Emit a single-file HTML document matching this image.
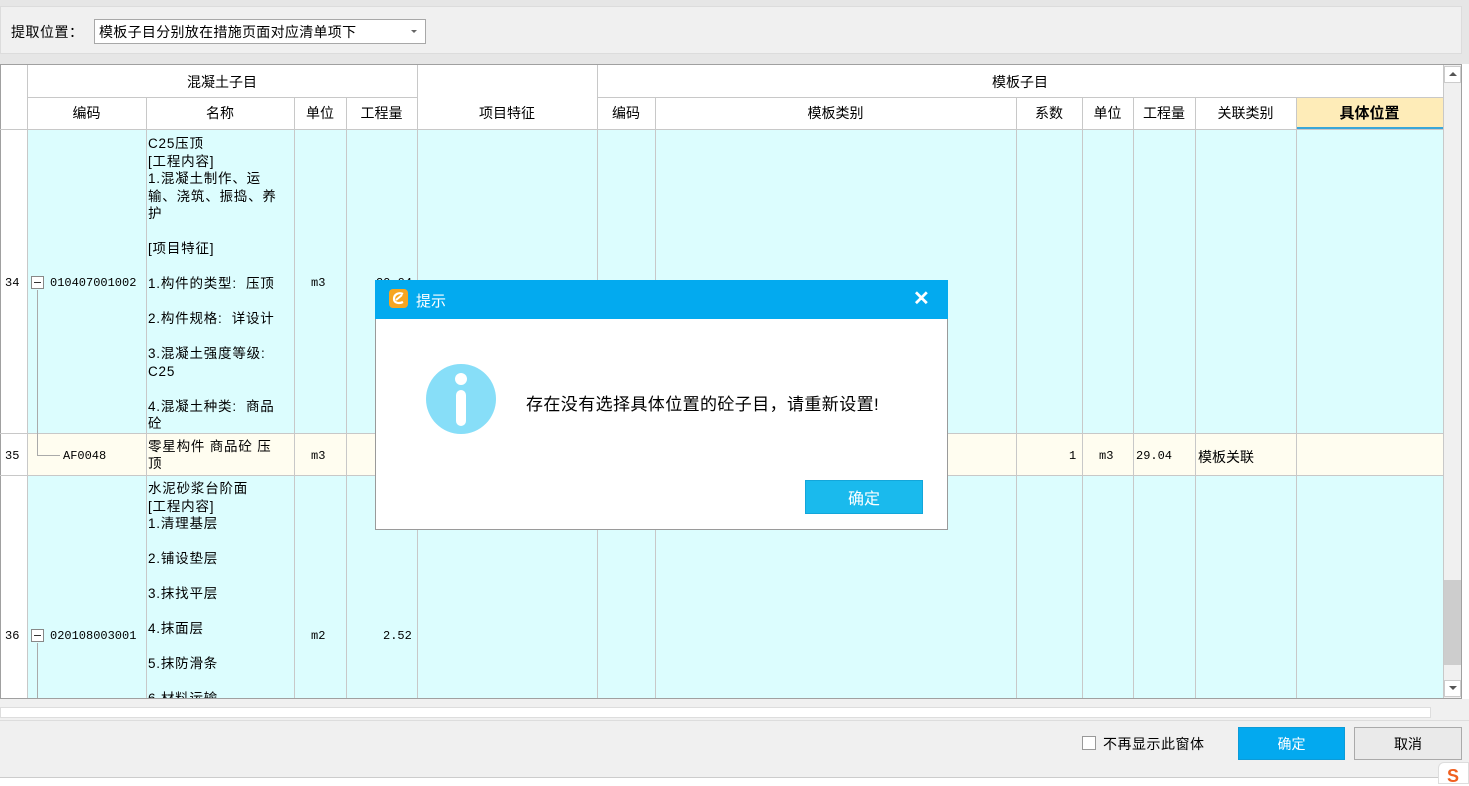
<!DOCTYPE html>
<html><head><meta charset="utf-8"><style>
*{margin:0;padding:0;box-sizing:border-box}
body{width:1469px;height:784px;overflow:hidden;background:#fff;font-family:"Liberation Sans","Noto Sans CJK SC",sans-serif;font-size:14px;color:#000;position:relative}
.a{position:absolute}
.c{position:absolute;display:flex;align-items:center;justify-content:center;white-space:nowrap}
.vl{position:absolute;width:1px;background:#c8c8c8}
.hl{position:absolute;height:1px;background:#c8c8c8}
.mono{font-family:"Liberation Mono","Noto Sans CJK SC",monospace;font-size:12px}
.nm{position:absolute;left:148px;font-size:13.5px;line-height:17.5px;white-space:pre;letter-spacing:0.8px}
</style></head><body>
<div class="a" style="left:0;top:0;width:1469px;height:64px;background:#e6e6e6"></div>
<div class="a" style="left:0;top:6px;width:1462px;height:48px;background:#f0f0f0;border:1px solid #dcdcdc"></div>
<div class="a" style="left:11px;top:22px;font-size:14px;letter-spacing:0.5px">提取位置：</div>
<div class="a" style="left:94px;top:19px;width:332px;height:25px;background:#fff;border:1px solid #a8a8a8"></div>
<div class="a" style="left:99px;top:22px;font-size:14px;letter-spacing:0.3px">模板子目分别放在措施页面对应清单项下</div>
<div class="a" style="left:411px;top:30px;width:0;height:0;border-left:3px solid transparent;border-right:3px solid transparent;border-top:3px solid #666"></div>

<div class="a" style="left:0;top:64px;width:1462px;height:635px;background:#fff;border:1px solid #a0a0a0"></div>
<div class="a" style="left:27px;top:129px;width:1416px;height:304px;background:#dcfdfe"></div>
<div class="a" style="left:27px;top:433px;width:1416px;height:42px;background:#fffdf0"></div>
<div class="a" style="left:27px;top:475px;width:1416px;height:223px;background:#dcfdfe"></div>
<div class="a" style="left:1296px;top:97px;width:147px;height:32px;background:#feecb8;border-bottom:2px solid #3aa6d8"></div>
<div class="hl" style="left:27px;top:97px;width:390px"></div>
<div class="hl" style="left:597px;top:97px;width:846px"></div>
<div class="hl" style="left:0;top:129px;width:1443px"></div>
<div class="hl" style="left:0;top:433px;width:1443px"></div>
<div class="hl" style="left:0;top:475px;width:1443px"></div>
<div class="vl" style="left:27px;top:65px;height:633px"></div>
<div class="vl" style="left:146px;top:97px;height:601px"></div>
<div class="vl" style="left:294px;top:97px;height:601px"></div>
<div class="vl" style="left:346px;top:97px;height:601px"></div>
<div class="vl" style="left:417px;top:65px;height:633px"></div>
<div class="vl" style="left:597px;top:65px;height:633px"></div>
<div class="vl" style="left:655px;top:97px;height:601px"></div>
<div class="vl" style="left:1016px;top:97px;height:601px"></div>
<div class="vl" style="left:1082px;top:97px;height:601px"></div>
<div class="vl" style="left:1133px;top:97px;height:601px"></div>
<div class="vl" style="left:1195px;top:97px;height:601px"></div>
<div class="vl" style="left:1296px;top:97px;height:601px"></div>
<div class="vl" style="left:1443px;top:65px;height:633px"></div>
<div class="c" style="left:27px;top:67px;width:390px;height:30px">混凝土子目</div>
<div class="c" style="left:597px;top:67px;width:846px;height:30px">模板子目</div>
<div class="c" style="left:27px;top:97px;width:119px;height:32px">编码</div>
<div class="c" style="left:146px;top:97px;width:148px;height:32px">名称</div>
<div class="c" style="left:294px;top:97px;width:52px;height:32px">单位</div>
<div class="c" style="left:346px;top:97px;width:71px;height:32px">工程量</div>
<div class="c" style="left:417px;top:97px;width:180px;height:32px">项目特征</div>
<div class="c" style="left:597px;top:97px;width:58px;height:32px">编码</div>
<div class="c" style="left:655px;top:97px;width:361px;height:32px">模板类别</div>
<div class="c" style="left:1016px;top:97px;width:66px;height:32px">系数</div>
<div class="c" style="left:1082px;top:97px;width:51px;height:32px">单位</div>
<div class="c" style="left:1133px;top:97px;width:62px;height:32px">工程量</div>
<div class="c" style="left:1195px;top:97px;width:101px;height:32px">关联类别</div>
<div class="c" style="left:1296px;top:97px;width:147px;height:30px;font-weight:bold;font-size:15px">具体位置</div>

<div class="a mono" style="left:5px;top:276px">34</div>
<div class="a" style="left:31px;top:276px;width:13px;height:13px;border:1px solid #888;background:#fff"></div>
<div class="a" style="left:34px;top:282px;width:7px;height:1px;background:#333"></div>
<div class="a" style="left:37px;top:290px;width:1px;height:143px;background:#aaa"></div>
<div class="a mono" style="left:50px;top:276px">010407001002</div>
<div class="nm" style="top:135px">C25压顶
[工程内容]
1.混凝土制作、运
输、浇筑、振捣、养
护

[项目特征]

1.构件的类型:  压顶

2.构件规格:  详设计

3.混凝土强度等级:
C25

4.混凝土种类:  商品
砼</div>
<div class="a mono" style="left:311px;top:276px">m3</div>
<div class="a mono" style="left:376px;top:276px">29.04</div>

<div class="a mono" style="left:5px;top:449px">35</div>
<div class="a" style="left:37px;top:433px;width:1px;height:22px;background:#aaa"></div>
<div class="a" style="left:37px;top:455px;width:23px;height:1px;background:#aaa"></div>
<div class="a mono" style="left:63px;top:449px">AF0048</div>
<div class="nm" style="top:438px;line-height:17px">零星构件 商品砼 压
顶</div>
<div class="a mono" style="left:311px;top:449px">m3</div>
<div class="a mono" style="left:1069px;top:449px">1</div>
<div class="a mono" style="left:1099px;top:449px">m3</div>
<div class="a mono" style="left:1136px;top:449px">29.04</div>
<div class="a" style="left:1198px;top:447px">模板关联</div>

<div class="a mono" style="left:5px;top:629px">36</div>
<div class="a" style="left:31px;top:629px;width:13px;height:13px;border:1px solid #888;background:#fff"></div>
<div class="a" style="left:34px;top:635px;width:7px;height:1px;background:#333"></div>
<div class="a" style="left:37px;top:643px;width:1px;height:55px;background:#aaa"></div>
<div class="a mono" style="left:50px;top:629px">020108003001</div>
<div class="a" style="left:147px;top:476px;width:147px;height:222px;overflow:hidden">
<div class="nm" style="left:1px;top:4px">水泥砂浆台阶面
[工程内容]
1.清理基层

2.铺设垫层

3.抹找平层

4.抹面层

5.抹防滑条

6.材料运输</div></div>
<div class="a mono" style="left:311px;top:629px">m2</div>
<div class="a mono" style="left:383px;top:629px">2.52</div>

<div class="a" style="left:1444px;top:65px;width:17px;height:633px;background:#f0f0f0"></div>
<div class="a" style="left:1444px;top:66px;width:17px;height:17px;background:#fff;border:1px solid #ccc"></div>
<div class="a" style="left:1449px;top:72px;border-left:4px solid transparent;border-right:4px solid transparent;border-bottom:4px solid #555"></div>
<div class="a" style="left:1444px;top:580px;width:17px;height:85px;background:#cdcdcd"></div>
<div class="a" style="left:1444px;top:680px;width:17px;height:17px;background:#fff;border:1px solid #ccc"></div>
<div class="a" style="left:1449px;top:686px;border-left:4px solid transparent;border-right:4px solid transparent;border-top:4px solid #555"></div>

<div class="a" style="left:0;top:699px;width:1469px;height:79px;background:#f0f0f0"></div>
<div class="a" style="left:0;top:707px;width:1431px;height:11px;background:#fff;border:1px solid #ddd"></div>
<div class="a" style="left:0;top:720px;width:1469px;height:1px;background:#ddd"></div>
<div class="a" style="left:1082px;top:736px;width:14px;height:14px;border:1px solid #999;background:#fff"></div>
<div class="a" style="left:1103px;top:734px;font-size:14px;letter-spacing:0.5px">不再显示此窗体</div>
<div class="c" style="left:1238px;top:727px;width:107px;height:33px;background:#03a9ef;color:#fff;border:1px solid #0c9bd8">确定</div>
<div class="c" style="left:1354px;top:727px;width:108px;height:33px;background:#eaeaea;border:1px solid #aaa">取消</div>
<div class="a" style="left:0;top:777px;width:1469px;height:7px;background:#fff;border-top:1px solid #ccc"></div>
<div class="a" style="left:1438px;top:762px;width:31px;height:22px;background:#fff;border-radius:6px 0 0 0;border:1px solid #ddd"></div>
<div class="a" style="left:1447px;top:768px;color:#f06020;font-weight:bold;font-size:18px;line-height:16px">S</div>

<div class="a" style="left:375px;top:280px;width:573px;height:250px;background:#fff;border:1px solid #9a9a9a"></div>
<div class="a" style="left:375px;top:280px;width:573px;height:39px;background:#03aaef"></div>
<div class="a" style="left:389px;top:289px;width:19px;height:19px;background:#f6a521;border-radius:4px"></div>
<svg class="a" style="left:389px;top:289px" width="19" height="19" viewBox="0 0 19 19"><path d="M14 5 C10 3 5 5 5 10 C5 14 10 15 14 13" stroke="#fff" stroke-width="2.2" fill="none"/><path d="M7 11 L13 6" stroke="#fff" stroke-width="2"/></svg>
<div class="a" style="left:416px;top:290px;color:#fff;font-size:15px">提示</div>
<div class="a" style="left:913px;top:286px;color:#fff;font-size:20px;font-weight:bold">✕</div>
<div class="a" style="left:426px;top:364px;width:70px;height:70px;border-radius:50%;background:#87def8"></div>
<div class="a" style="left:455px;top:373px;width:12px;height:12px;border-radius:50%;background:#fff"></div>
<div class="a" style="left:456px;top:390px;width:10px;height:36px;border-radius:5px;background:#fff"></div>
<div class="a" style="left:526px;top:390px;font-size:17px;letter-spacing:0.4px">存在没有选择具体位置的砼子目，请重新设置!</div>
<div class="c" style="left:805px;top:480px;width:118px;height:34px;background:#1abaed;color:#fff;font-size:16px;border:1px solid #13a6da">确定</div>
</body></html>
